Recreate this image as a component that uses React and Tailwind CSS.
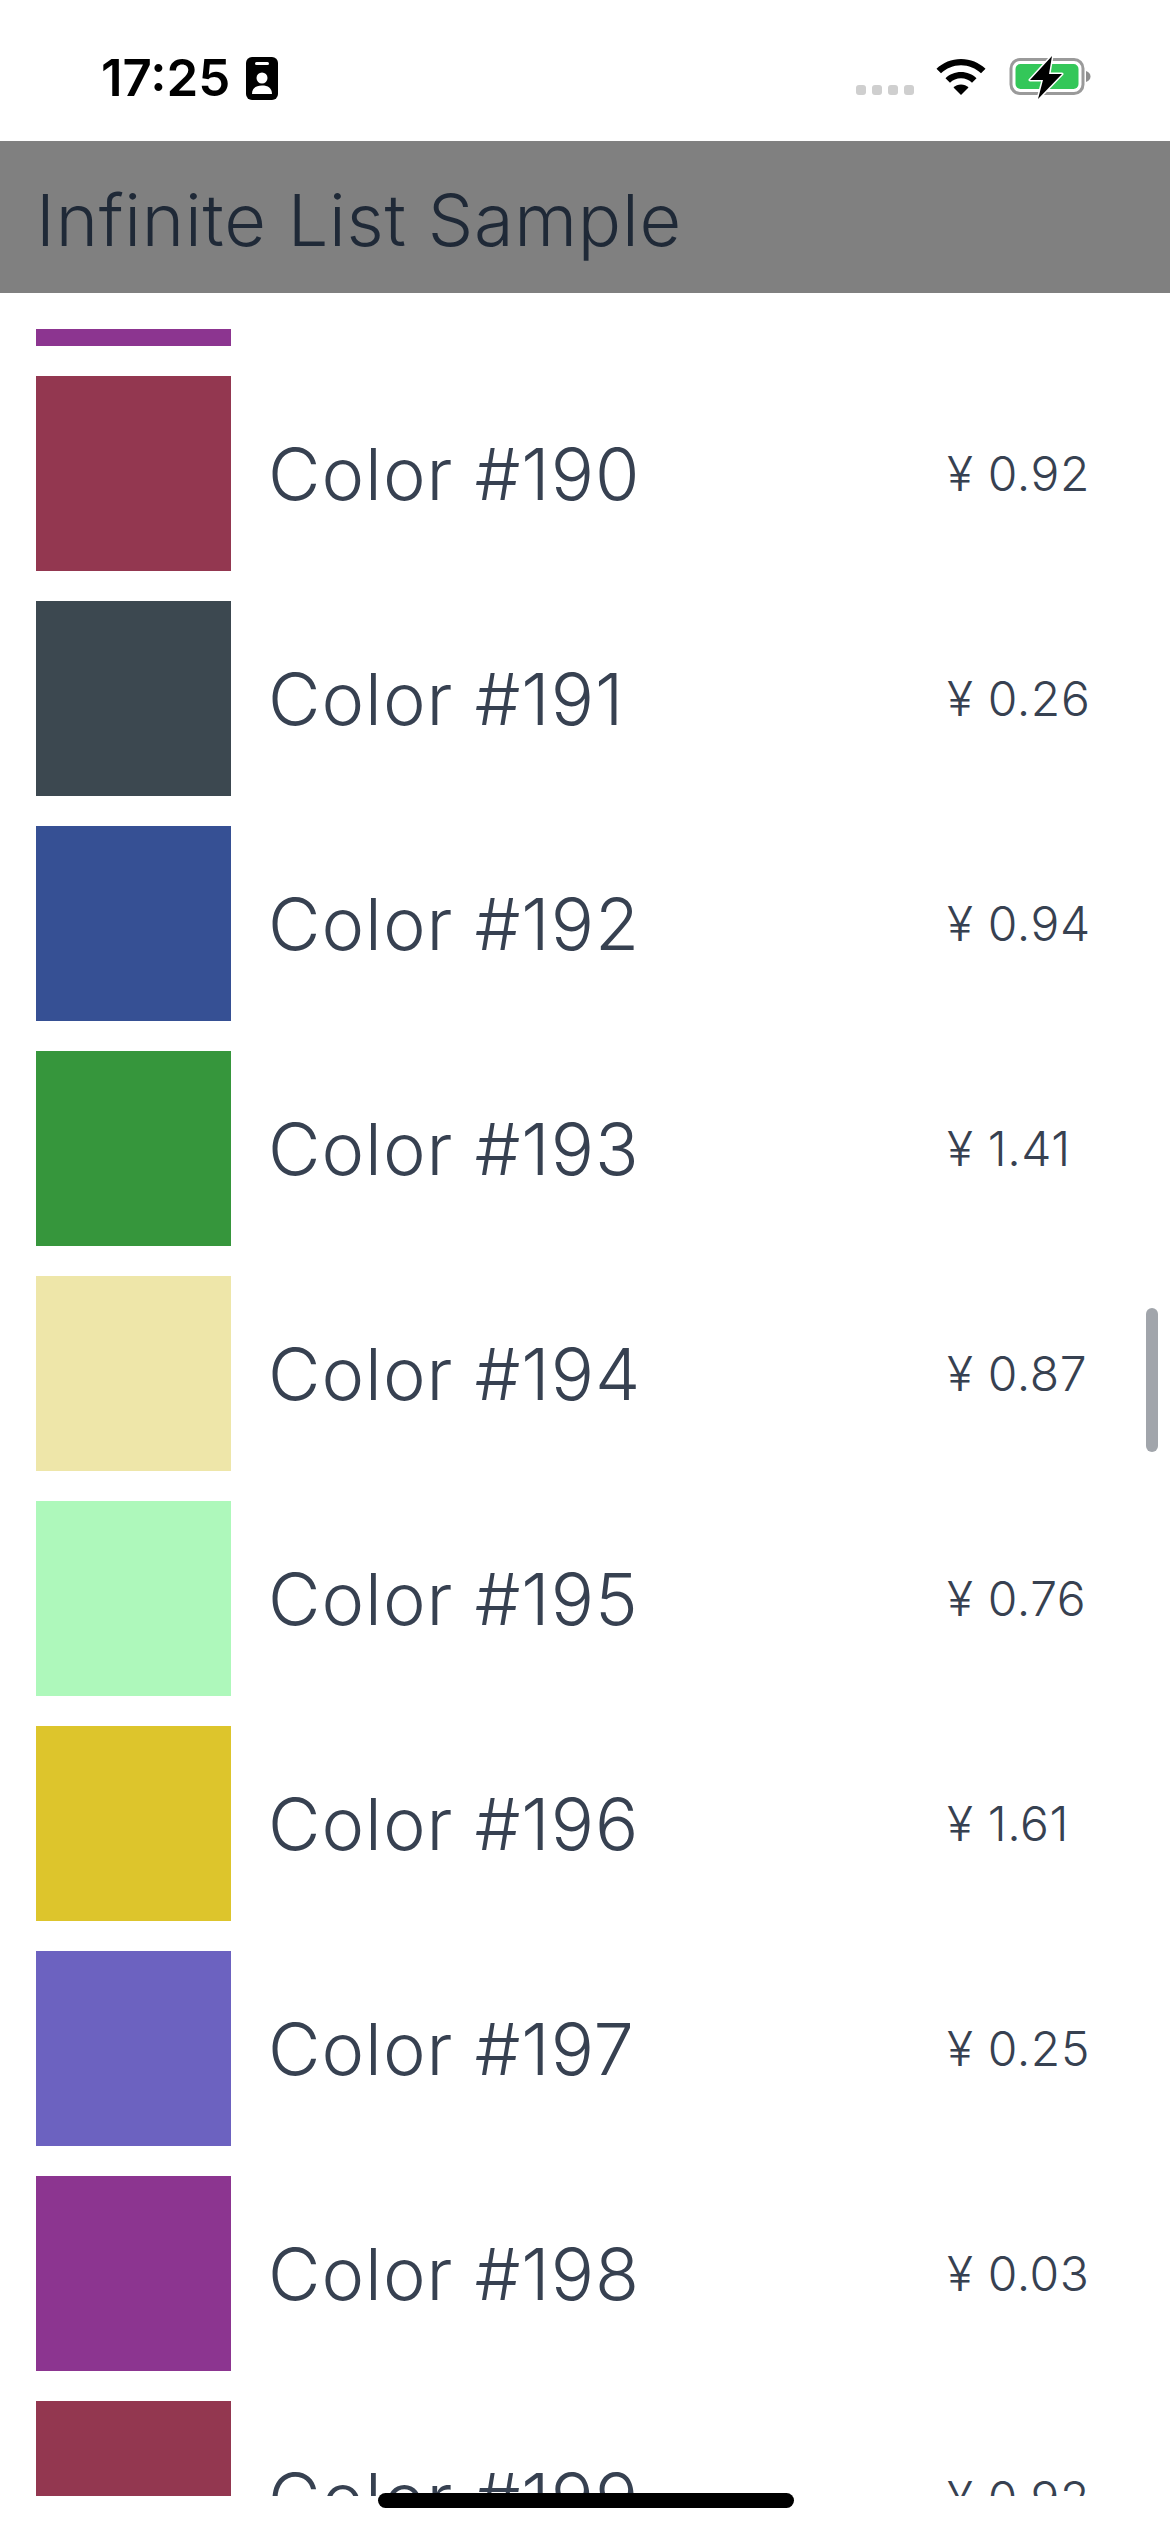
const rows = [
  { n: 189, c: "bg-[#8c3590]", p: "0.03" },
  { n: 190, c: "bg-[#933750]", p: "0.92" },
  { n: 191, c: "bg-[#3c4850]", p: "0.26" },
  { n: 192, c: "bg-[#365094]", p: "0.94" },
  { n: 193, c: "bg-[#36963c]", p: "1.41" },
  { n: 194, c: "bg-[#eee6a9]", p: "0.87" },
  { n: 195, c: "bg-[#aef8bb]", p: "0.76" },
  { n: 196, c: "bg-[#ddc52c]", p: "1.61" },
  { n: 197, c: "bg-[#6c62c0]", p: "0.25" },
  { n: 198, c: "bg-[#8c3590]", p: "0.03" },
  { n: 199, c: "bg-[#933750]", p: "0.92" },
];

function Wifi() {
  return (
    <svg width="50" height="38" viewBox="0 0 50 38" className="absolute left-[936px] top-[59px]">
      <path d="M25 0C15.500 0 7 3.700 0.500 9.700L5 14.300C10.300 9.300 17.300 6.300 25 6.300C32.700 6.300 39.700 9.300 45 14.300L49.500 9.700C43 3.700 34.500 0 25 0Z" fill="#000" />
      <path d="M25 13C19 13 13.500 15.300 9.500 19.200L14 23.800C16.900 21 20.700 19.300 25 19.300C29.300 19.300 33.100 21 36 23.800L40.500 19.200C36.500 15.300 31 13 25 13Z" fill="#000" />
      <path d="M25 25.500C22.100 25.500 19.400 26.700 17.500 28.500L25 36L32.500 28.500C30.600 26.700 27.900 25.500 25 25.500Z" fill="#000" />
    </svg>
  );
}

function Battery() {
  return (
    <svg width="84" height="44" viewBox="0 0 84 44" className="absolute left-[1008px] top-[56px]">
      <rect x="3" y="3.500" width="72" height="34" rx="9" fill="none" stroke="#9a9a9a" strokeWidth="3" />
      <rect x="7.500" y="8" width="63" height="25" rx="5" fill="#34c759" />
      <path d="M78 15C81 16 82.500 18 82.500 20.500C82.500 23 81 25 78 26Z" fill="#8e8e8e" />
      <path d="M44 0L22 24H35L30 43L54 18H41Z" fill="#000" stroke="#fff" strokeWidth="3" paintOrder="stroke" strokeLinejoin="round" />
    </svg>
  );
}

function IdBadge() {
  return (
    <svg width="32" height="44" viewBox="0 0 32 44" className="absolute left-[246px] top-[57px]">
      <rect x="0" y="0" width="32" height="43" rx="6" fill="#000" />
      <rect x="9" y="5" width="14" height="3" rx="1.500" fill="#fff" />
      <circle cx="16" cy="21" r="5.500" fill="#fff" />
      <path d="M6 37C6 31 10 28.500 16 28.500C22 28.500 26 31 26 37Z" fill="#fff" />
    </svg>
  );
}

export default function App() {
  return (
    <div className="relative flex h-[2532px] w-[1170px] flex-col overflow-hidden bg-white font-['Inter',sans-serif] text-[#374151] [font-optical-sizing:none]">
      <div className="h-[141px] shrink-0 bg-white">
        <span className="absolute left-[101px] top-[53px] text-[51px] leading-[50px] font-semibold text-black">17:25</span>
        <IdBadge />
        <div className="absolute left-[856px] top-[85px] flex gap-[6px]">
          <span className="h-[10px] w-[10px] rounded-[3px] bg-[#cfcfcf]" />
          <span className="h-[10px] w-[10px] rounded-[3px] bg-[#cfcfcf]" />
          <span className="h-[10px] w-[10px] rounded-[3px] bg-[#cfcfcf]" />
          <span className="h-[10px] w-[10px] rounded-[3px] bg-[#cfcfcf]" />
        </div>
        <Wifi />
        <Battery />
      </div>
      <div className="flex h-[152px] shrink-0 items-center bg-[#808080] pt-[5px] pl-[36px] text-[72px] font-[350] tracking-[0.75px] text-[#1f2937]">
        Infinite List Sample
      </div>
      <div className="mt-[36px] h-[2167px] overflow-hidden">
        <div className="-mt-[178px] flex flex-col gap-[30px] pl-[36px]">
          {rows.map((r) => (
            <div key={r.n} className="flex h-[195px] shrink-0 items-center">
              <div className={`h-[195px] w-[195px] shrink-0 ${r.c}`} />
              <div className="ml-[37px] w-[679px] text-[72px] font-[350] tracking-[1px]">Color #{r.n}</div>
              <div className="text-[48px] font-[350] tracking-[0.6px]">¥ {r.p}</div>
            </div>
          ))}
        </div>
      </div>
      <div className="absolute left-[1146px] top-[1308px] h-[144px] w-[12px] rounded-full bg-[#a1a5ab]" />
      <div className="absolute left-[378px] top-[2493px] h-[15px] w-[416px] rounded-full bg-black" />
    </div>
  );
}
